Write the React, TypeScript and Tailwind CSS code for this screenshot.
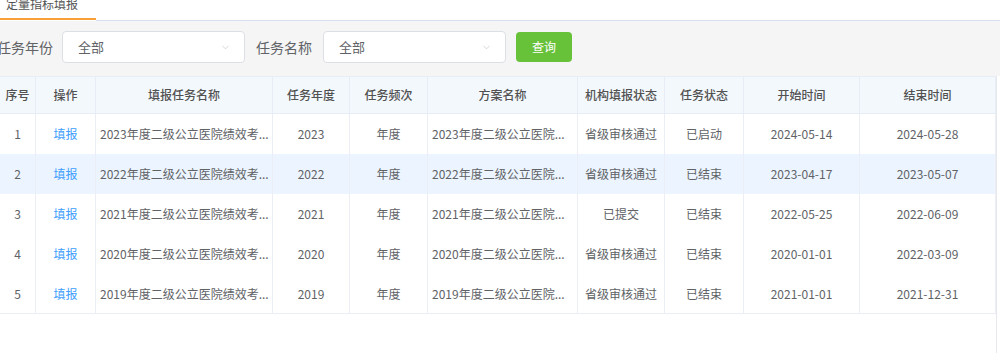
import { ChevronDown } from 'lucide-react'

const cols = [
  { key: 'idx', label: '序号' },
  { key: 'op', label: '操作' },
  { key: 'name', label: '填报任务名称', left: true },
  { key: 'year', label: '任务年度' },
  { key: 'freq', label: '任务频次' },
  { key: 'plan', label: '方案名称', left: true },
  { key: 'org', label: '机构填报状态' },
  { key: 'status', label: '任务状态' },
  { key: 'start', label: '开始时间' },
  { key: 'end', label: '结束时间' },
]

const rows = [
  { idx: '1', op: '填报', name: '2023年度二级公立医院绩效考...', year: '2023', freq: '年度', plan: '2023年度二级公立医院...', org: '省级审核通过', status: '已启动', start: '2024-05-14', end: '2024-05-28' },
  { idx: '2', op: '填报', name: '2022年度二级公立医院绩效考...', year: '2022', freq: '年度', plan: '2022年度二级公立医院...', org: '省级审核通过', status: '已结束', start: '2023-04-17', end: '2023-05-07' },
  { idx: '3', op: '填报', name: '2021年度二级公立医院绩效考...', year: '2021', freq: '年度', plan: '2021年度二级公立医院...', org: '已提交', status: '已结束', start: '2022-05-25', end: '2022-06-09' },
  { idx: '4', op: '填报', name: '2020年度二级公立医院绩效考...', year: '2020', freq: '年度', plan: '2020年度二级公立医院...', org: '省级审核通过', status: '已结束', start: '2020-01-01', end: '2022-03-09' },
  { idx: '5', op: '填报', name: '2019年度二级公立医院绩效考...', year: '2019', freq: '年度', plan: '2019年度二级公立医院...', org: '省级审核通过', status: '已结束', start: '2021-01-01', end: '2021-12-31' },
]

const grid = 'grid grid-cols-[36px_60px_177px_77px_78px_150px_87px_79px_116px_136px]'

function Select({ value }: { value: string }) {
  return (
    <div className="w-[183px] h-[32px] bg-white border border-[#dcdfe6] rounded-[4px] flex items-center pl-[15px] pr-[13px]">
      <span className="flex-1 text-[13px] text-[#606266]">{value}</span>
      <ChevronDown className="w-[11px] h-[11px] text-[#c0c4cc]" strokeWidth={1.5} />
    </div>
  )
}

export default function App() {
  return (
    <div className="w-[1000px] h-[353px] bg-white overflow-hidden font-['Noto_Sans_CJK_SC','Noto_Sans',sans-serif]">
      <div className="flex h-[21px]">
        <div className="w-[96px] h-[20px] border-b-2 border-[#f7a035] pl-[6px]">
          <div className="text-[12px] leading-[12px] -mt-[2px] text-[#555]">定量指标填报</div>
        </div>
        <div className="flex-1 border-b border-[#d6e0ef]" />
      </div>

      <div className="h-[55px] bg-[#f5f5f5] flex items-start pt-[10px] -ml-[3px]">
        <span className="text-[14px] leading-[32px] text-[#606266]">任务年份</span>
        <div className="ml-[9px]"><Select value="全部" /></div>
        <span className="ml-[11px] text-[14px] leading-[32px] text-[#606266]">任务名称</span>
        <div className="ml-[11px]"><Select value="全部" /></div>
        <button className="ml-[10px] mt-px w-[56px] h-[30px] rounded-[4px] bg-[#67c23a] text-white text-[12px]">查询</button>
      </div>

      <div className="w-[997px] h-[277px] border-r border-[#e6e8ec]">
        <div className={`${grid} h-[38px] bg-[#f3f8fd] border-y border-[#e6edf7]`}>
          {cols.map(c => (
            <div key={c.key} className="border-r border-[#e6edf7] flex items-center justify-center text-[12px] font-medium text-[#515151]">
              {c.label}
            </div>
          ))}
        </div>
        {rows.map((r, i) => (
          <div key={r.idx} className={`${grid} h-[40px] ${i === 1 ? 'bg-[#ecf5ff]' : 'bg-white'} ${i === rows.length - 1 ? 'border-b border-[#ebeef5]' : ''}`}>
            {cols.map(c => (
              <div
                key={c.key}
                className={`border-r border-[#ebeef5] flex items-center text-[12px] whitespace-nowrap overflow-hidden ${c.left ? 'pl-[4px]' : 'justify-center'} ${c.key === 'op' ? 'text-[#409eff]' : 'text-[#606266]'}`}
              >
                {r[c.key as keyof typeof r]}
              </div>
            ))}
          </div>
        ))}
      </div>
    </div>
  )
}
